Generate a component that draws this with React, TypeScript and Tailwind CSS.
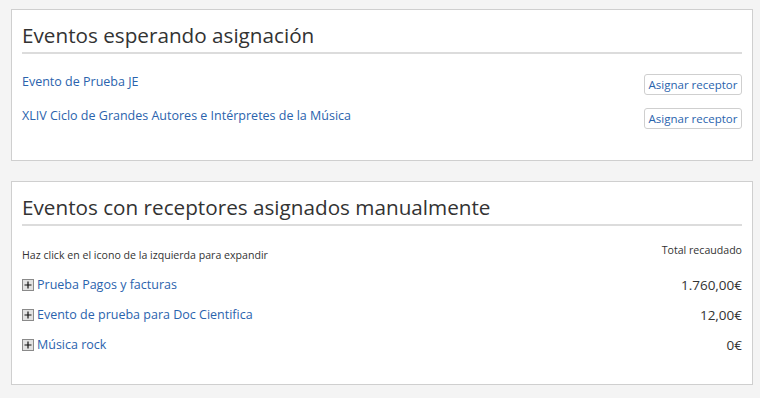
const pending = [
  'Evento de Prueba JE',
  'XLIV Ciclo de Grandes Autores e Intérpretes de la Música',
]

const assigned = [
  { name: 'Prueba Pagos y facturas', total: '1.760,00€' },
  { name: 'Evento de prueba para Doc Cientifica', total: '12,00€' },
  { name: 'Música rock', total: '0€' },
]

function PlusBox() {
  return (
    <svg width="12" height="12" viewBox="0 0 12 12" className="shrink-0">
      <rect x="0.5" y="0.5" width="11" height="11" fill="#e2e2e2" stroke="#8a8a8a" />
      <path d="M2.5 6h7M6 2.5v7" stroke="#111" strokeWidth="1.2" />
    </svg>
  )
}

function Heading({ children }: { children: string }) {
  return (
    <h2 className="text-[20.7px] leading-[28px] text-[#333] pb-[3px] border-b-2 border-[#dcdcdc]">
      {children}
    </h2>
  )
}

function App() {
  return (
    <div
      className="min-h-screen bg-[#f4f4f4] pt-[9px] pl-[11px] pr-[7px] pb-3 text-[#333]"
      style={{ fontFamily: '"Open Sans", "Liberation Sans", sans-serif' }}
    >
      <section className="bg-white border border-[#cfcfcf] h-[152px] px-[10px] pt-[11px]">
        <Heading>Eventos esperando asignación</Heading>
        <div className="mt-[20px] flex flex-col gap-[13px]">
          {pending.map((ev) => (
            <div key={ev} className="flex items-center justify-between h-[21px]">
              <a className="text-[12.5px] text-[#2a63ad] -mt-[5px]">{ev}</a>
              <button className="h-[21px] w-[98px] rounded-[3px] border border-[#cfcfcf] text-[11.5px] text-[#2a63ad] bg-white">
                Asignar receptor
              </button>
            </div>
          ))}
        </div>
      </section>

      <section className="mt-5 bg-white border border-[#cfcfcf] h-[204px] px-[10px] pt-[11px]">
        <Heading>Eventos con receptores asignados manualmente</Heading>
        <div className="mt-[17px] flex justify-between text-[10.6px] leading-[14px]">
          <span className="mt-[5px]">Haz click en el icono de la izquierda para expandir</span>
          <span>Total recaudado</span>
        </div>
        <div className="mt-[14px] flex flex-col gap-[12px]">
          {assigned.map((ev) => (
            <div key={ev.name} className="flex items-center justify-between h-[18px]">
              <div className="flex items-center gap-[3px]">
                <PlusBox />
                <a className="text-[12.5px] text-[#2a63ad]">{ev.name}</a>
              </div>
              <span className="text-[13.5px]">{ev.total}</span>
            </div>
          ))}
        </div>
      </section>
    </div>
  )
}

export default App
